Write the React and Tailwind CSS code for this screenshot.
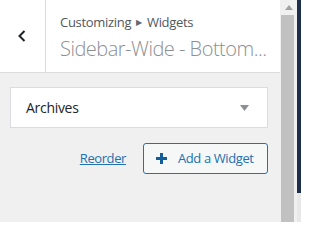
import React from "react";

export default function App() {
  return (
    <div className="flex h-[222px] w-[301px] overflow-hidden bg-[#f0f0f1]" style={{ fontFamily: '"Open Sans", "Noto Sans", sans-serif' }}>
      <div className="flex w-[280px] flex-col">
        <div className="flex h-[73px] border-b border-[#dcdcde] bg-white">
          <div className="flex w-[46px] items-center justify-center border-r border-[#dcdcde]">
            <svg width="10" height="14" viewBox="0 0 10 14" className="ml-[-2px]">
              <path d="M7.5 2 L2.5 7 L7.5 12" fill="none" stroke="#1d2327" strokeWidth="2" />
            </svg>
          </div>
          <div className="flex flex-col pl-[14px] pt-[13px]">
            <div className="flex items-center whitespace-nowrap text-[13px] leading-[18px] text-[#50575e] tracking-[-0.3px]">
              <span>Customizing</span>
              <span className="mx-[5px] text-[8px] text-[#646970]">▶</span>
              <span>Widgets</span>
            </div>
            <div className="mt-[6px] whitespace-nowrap text-[20px] leading-[24px] font-light text-[#8c8f94] tracking-[-0.5px]">
              Sidebar-Wide - Bottom...
            </div>
          </div>
        </div>
        <div className="flex flex-col px-[10px] pt-[14px]">
          <div className="flex h-[41px] w-[258px] items-center justify-between border border-[#dcdcde] bg-white pl-[15px] pr-[18px]">
            <span className="text-[14px] text-[#1d2327] tracking-[-0.3px]">Archives</span>
            <svg width="9" height="6" viewBox="0 0 9 6"><path d="M0 0 L9 0 L4.5 6 Z" fill="#8c8f94" /></svg>
          </div>
          <div className="mt-[15px] flex w-[258px] items-center justify-end gap-[17px]">
            <a className="text-[13px] text-[#2271b1] underline tracking-[-0.4px]">Reorder</a>
            <button className="flex h-[31px] w-[125px] items-center rounded-[3px] border border-[#2271b1] bg-[#f6f7f7] pl-[12px] text-[13px] text-[#2271b1] tracking-[-0.4px]">
              <svg width="11" height="11" viewBox="0 0 11 11" className="mr-[11px]"><path d="M5.5 0 V11 M0 5.5 H11" stroke="#135e96" strokeWidth="3" /></svg>
              Add a Widget
            </button>
          </div>
        </div>
      </div>
      <div className="flex w-[17px] flex-col bg-[#f0f0f0]">
        <div className="flex h-[15px] items-center justify-center">
          <svg width="8" height="5" viewBox="0 0 8 5"><path d="M0 5 L4 0 L8 5 Z" fill="#a3a3a3" /></svg>
        </div>
        <div className="ml-[1px] w-[13px] flex-1 bg-[#c1c1c1]" />
      </div>
      <div className="flex w-[4px] flex-col">
        <div className="h-[193px] bg-[#1e2f4c]" />
        <div className="flex-1 bg-[#e8e8e8]" />
      </div>
    </div>
  );
}
